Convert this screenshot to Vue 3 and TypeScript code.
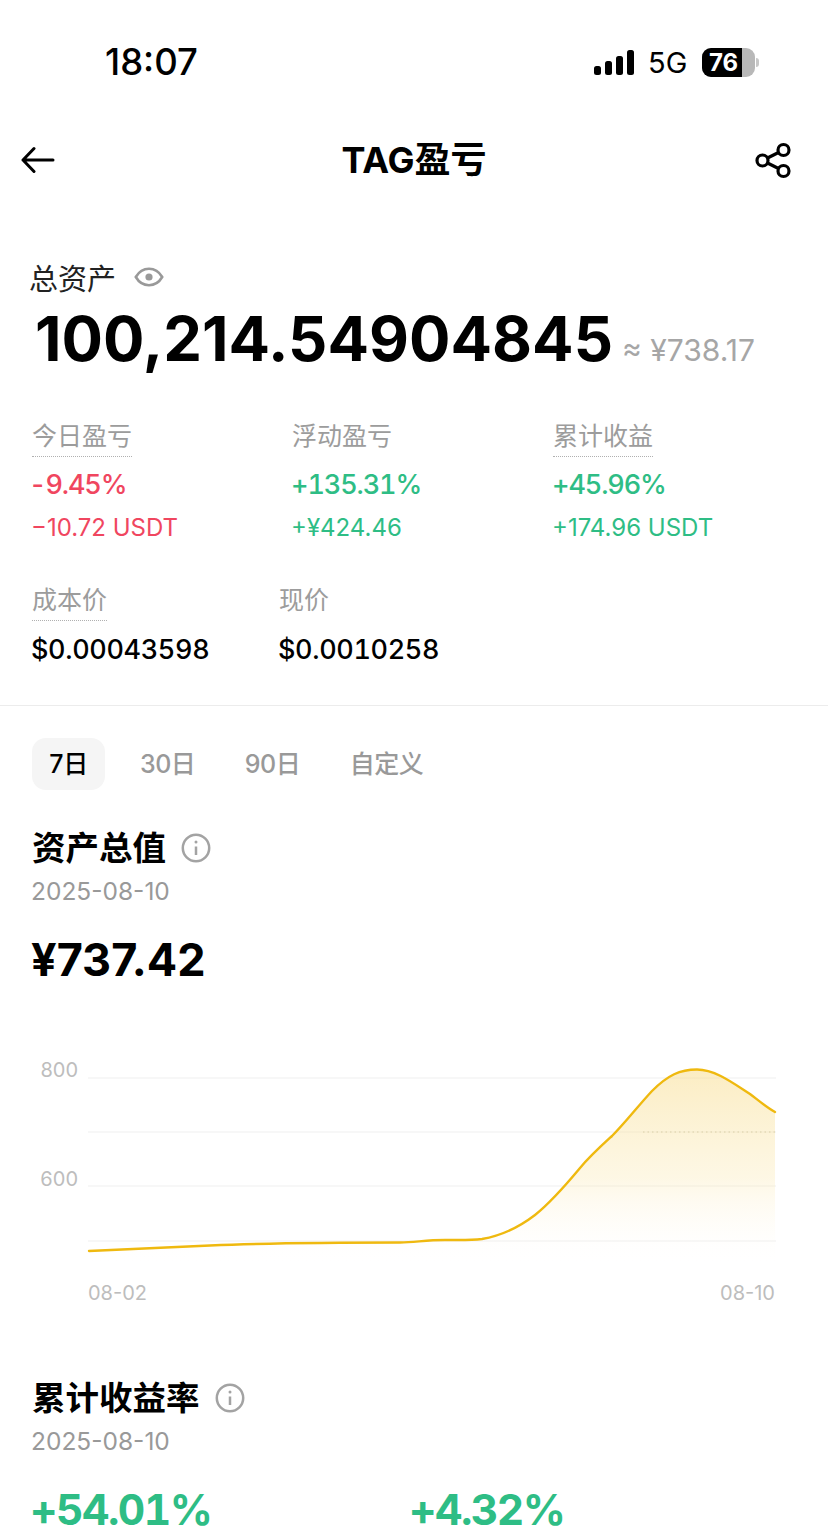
<script setup lang="ts">
const stats = [
  { label: '今日盈亏', pct: '-9.45%', sub: '−10.72 USDT', tone: 'down', dotted: true },
  { label: '浮动盈亏', pct: '+135.31%', sub: '+¥424.46', tone: 'up', dotted: false },
  { label: '累计收益', pct: '+45.96%', sub: '+174.96 USDT', tone: 'up', dotted: true },
];
const prices = [
  { label: '成本价', value: '$0.00043598', dotted: true },
  { label: '现价', value: '$0.0010258', dotted: false },
];
const tabs = ['7日', '30日', '90日', '自定义'];
const gridLines = [28, 82, 136, 191];

// chart coords: x is page x, y is relative to the top of the chart block (page y 1050)
const linePath =
  'M89 201 C130 199 170 197 210 195.500 C270 193 330 192.500 400 192.500 C415 192.500 425 190 445 190 C460 190 470 190.500 482 189 C500 186 518 178 535 165 C550 153 565 136 580 118 C590 106 600 97 612 86 C625 73 638 56 652 41 C668 25 680 19.500 697 19.500 C715 19.500 733 33 750 44 C758 50 766 57 775 62';
const areaPath = `${linePath} L775 216 L89 216 Z`;
</script>

<template>
  <div class="page">
    <header class="status">
      <span class="time">18:07</span>
      <div class="status-right">
        <svg class="signal" width="41" height="25" viewBox="0 0 41 25" fill="#000">
          <rect x="0" y="16" width="7" height="9" rx="2.500" />
          <rect x="11" y="11" width="7" height="14" rx="2.500" />
          <rect x="22" y="6" width="7" height="19" rx="2.500" />
          <rect x="33" y="0" width="7" height="25" rx="2.500" />
        </svg>
        <span class="net">5G</span>
        <div class="battery">
          <div class="battery-body">
            <span class="battery-fill">76</span>
          </div>
          <i class="battery-cap"></i>
        </div>
      </div>
    </header>

    <nav class="nav">
      <svg class="back" width="34" height="28" viewBox="0 0 34 28" fill="none" stroke="#000" stroke-width="3" stroke-linecap="round" stroke-linejoin="round">
        <path d="M32 14H2M13 2.500 2 14l11 11.500" />
      </svg>
      <h1>TAG盈亏</h1>
      <svg class="share" width="37" height="37" viewBox="0 0 37 37" fill="none" stroke="#000" stroke-width="3.200">
        <circle cx="28.500" cy="8" r="5.500" />
        <circle cx="7.500" cy="18.500" r="5.500" />
        <circle cx="28.500" cy="29" r="5.500" />
        <path d="m12.500 16 11-5.500M12.500 21l11 5.500" />
      </svg>
    </nav>

    <section class="summary">
      <div class="total-label">
        <span>总资产</span>
        <svg width="30" height="20" viewBox="0 0 30 20" fill="none" stroke="#999" stroke-width="2.600">
          <path d="M1.800 10C5 4.500 9.500 1.800 15 1.800S25 4.500 28.200 10C25 15.500 20.500 18.200 15 18.200S5 15.500 1.800 10Z" />
          <circle cx="15" cy="10" r="3.600" fill="#999" stroke="none" />
        </svg>
      </div>
      <div class="total-row">
        <strong>100,214.54904845</strong>
        <span>≈ ¥738.17</span>
      </div>

      <div class="stats">
        <div v-for="s in stats" :key="s.label" class="stat">
          <span class="label" :class="{ dotted: s.dotted }">{{ s.label }}</span>
          <span class="pct" :class="s.tone">{{ s.pct }}</span>
          <span class="sub" :class="s.tone">{{ s.sub }}</span>
        </div>
      </div>

      <div class="prices">
        <div v-for="p in prices" :key="p.label" class="price">
          <span class="label" :class="{ dotted: p.dotted }">{{ p.label }}</span>
          <span class="price-value">{{ p.value }}</span>
        </div>
      </div>
    </section>

    <section class="detail">
      <div class="tabs">
        <span v-for="(t, i) in tabs" :key="t" class="tab" :class="{ active: i === 0 }">{{ t }}</span>
      </div>

      <div class="head">
        <h2>资产总值</h2>
        <svg class="info" width="30" height="30" viewBox="0 0 30 30" fill="none" stroke="#a3a3a3" stroke-width="2.500">
          <circle cx="15" cy="15" r="13.200" />
          <path d="M15 13.500V22" />
          <circle cx="15" cy="9" r="1.500" fill="#a3a3a3" stroke="none" />
        </svg>
      </div>
      <p class="date">2025-08-10</p>
      <p class="amount">¥737.42</p>

      <svg class="chart" width="828" height="265" viewBox="0 0 828 265">
        <defs>
          <linearGradient id="fade" x1="0" y1="0" x2="0" y2="1">
            <stop offset="0" stop-color="#f8dc8c" stop-opacity="0.52" />
            <stop offset="0.55" stop-color="#fae5a6" stop-opacity="0.3" />
            <stop offset="1" stop-color="#fff" stop-opacity="0" />
          </linearGradient>
        </defs>
        <line v-for="y in gridLines" :key="y" x1="88" :y1="y" x2="776" :y2="y" stroke="#efefef" stroke-width="1" />
        <path :d="areaPath" fill="url(#fade)" />
        <line x1="643" y1="82" x2="775" y2="82" stroke="#d9cfa8" stroke-width="1" stroke-dasharray="1.500 3" />
        <path :d="linePath" fill="none" stroke="#efb90f" stroke-width="2.400" stroke-linecap="round" />
        <text class="axis" x="78" y="27" text-anchor="end">800</text>
        <text class="axis" x="78" y="136" text-anchor="end">600</text>
        <text class="axis" x="88" y="250">08-02</text>
        <text class="axis" x="775" y="250" text-anchor="end">08-10</text>
      </svg>

      <div class="head second">
        <h2>累计收益率</h2>
        <svg class="info" width="30" height="30" viewBox="0 0 30 30" fill="none" stroke="#a3a3a3" stroke-width="2.500">
          <circle cx="15" cy="15" r="13.200" />
          <path d="M15 13.500V22" />
          <circle cx="15" cy="9" r="1.500" fill="#a3a3a3" stroke="none" />
        </svg>
      </div>
      <p class="date">2025-08-10</p>
      <div class="rates">
        <span>+54.01%</span>
        <span>+4.32%</span>
      </div>
    </section>
  </div>
</template>

<style>
html,
body {
  margin: 0;
  background: #fff;
  overflow: hidden;
}
</style>

<style scoped>
.page {
  width: 828px;
  height: 1526px;
  overflow: hidden;
  background: #fff;
  color: #000;
  font-family: Inter, "Noto Sans CJK SC", sans-serif;
}

.status {
  height: 124px;
  box-sizing: border-box;
  padding: 40px 69px 0 105px;
  display: flex;
  justify-content: space-between;
  align-items: flex-start;
}

.time {
  font-size: 36.500px;
  line-height: 44px;
  font-weight: 500;
}

.status-right {
  display: flex;
  align-items: center;
  height: 44px;
}

.net {
  margin-left: 13px;
  font-size: 29px;
  font-weight: 400;
  width: 54px;
}

.battery {
  display: flex;
  align-items: center;
}

.battery-body {
  width: 53px;
  height: 29px;
  border-radius: 9px;
  overflow: hidden;
  background: #b8b8b8;
}

.battery-fill {
  display: block;
  width: 40px;
  height: 29px;
  background: #000;
  color: #fff;
  font-size: 24px;
  font-weight: 700;
  line-height: 29px;
  text-align: center;
  padding-left: 3px;
  box-sizing: border-box;
}

.battery-cap {
  display: block;
  width: 3px;
  height: 9px;
  margin-left: 1px;
  border-radius: 0 3px 3px 0;
  background: #c8c8c8;
}

.nav {
  height: 72px;
  box-sizing: border-box;
  padding: 0 36px;
  display: grid;
  grid-template-columns: 1fr auto 1fr;
  align-items: center;
}

.back {
  margin-left: -15px;
}

.share {
  justify-self: end;
}

.nav h1 {
  margin: 0;
  font-size: 36px;
  line-height: 72px;
  font-weight: 700;
}

.summary {
  padding: 61px 0 0 29px;
  height: 510px;
  box-sizing: border-box;
  border-bottom: 1.500px solid #ececec;
}

.total-label {
  display: flex;
  align-items: center;
  gap: 18px;
  height: 40px;
  font-size: 29px;
  color: #222;
}

.total-row {
  display: flex;
  align-items: baseline;
  margin-left: 6px;
  height: 84px;
  line-height: 84px;
}

.total-row strong {
  font-size: 61.500px;
  font-weight: 700;
}

.total-row span {
  margin-left: 9px;
  font-size: 30px;
  color: #a6a6a6;
}

.stats {
  display: grid;
  grid-template-columns: 260px 261px auto;
  margin: 36px 0 0 3px;
}

.stat,
.price {
  display: flex;
  flex-direction: column;
  align-items: flex-start;
}

.label {
  font-size: 25px;
  line-height: 38px;
  color: #9c9c9c;
  padding-bottom: 1px;
  border-bottom: 1.500px solid transparent;
}

.label.dotted {
  border-bottom: 1.500px dotted #b0b0b0;
}

.pct {
  margin-top: 8px;
  margin-left: -1px;
  font-size: 27px;
  line-height: 40px;
  font-weight: 500;
  font-variant-numeric: tabular-nums;
  letter-spacing: -1.100px;
}

.pct.down {
  margin-left: -3px;
}

.sub {
  margin-top: 3px;
  margin-left: -1px;
  font-size: 24px;
  line-height: 40px;
}

.up {
  color: #2ebd85;
}

.down {
  color: #f0465f;
}

.prices {
  display: grid;
  grid-template-columns: 247px auto;
  margin: 33px 0 0 3px;
}

.price-value {
  margin-top: 9px;
  margin-left: -1px;
  font-size: 27px;
  line-height: 40px;
  font-weight: 500;
  font-variant-numeric: tabular-nums;
  letter-spacing: -0.350px;
}

.detail {
  padding: 32px 0 0 32px;
}

.tabs {
  display: flex;
  align-items: center;
  height: 52px;
}

.tab {
  font-size: 25px;
  line-height: 52px;
  color: #999;
  margin-right: 49.500px;
  font-weight: 500;
  letter-spacing: -0.500px;
}

.tab.active {
  color: #000;
  background: #f5f5f5;
  border-radius: 14px;
  width: 73px;
  text-align: center;
  margin-right: 35px;
}

.head {
  display: flex;
  align-items: center;
  gap: 15px;
  height: 50px;
  margin-top: 33px;
}

.head h2 {
  margin: 0;
  font-size: 33.500px;
  line-height: 50px;
  font-weight: 700;
}

.date {
  margin: 0 0 0 -1px;
  font-size: 24.500px;
  line-height: 36px;
  color: #999;
}

.amount {
  margin: 21px 0 0 -1px;
  font-size: 45px;
  line-height: 60px;
  font-weight: 700;
}

.chart {
  display: block;
  margin: 60px 0 0 -32px;
}

.axis {
  font-family: Inter, sans-serif;
  font-size: 20px;
  fill: #bdbdbd;
}

.second {
  margin-top: 58px;
}

.rates {
  display: grid;
  grid-template-columns: 379px auto;
  margin: 21px 0 0 -2px;
  font-size: 42.500px;
  line-height: 60px;
  font-weight: 700;
  font-variant-numeric: tabular-nums;
  letter-spacing: -1.500px;
  color: #2ebd85;
}
</style>
